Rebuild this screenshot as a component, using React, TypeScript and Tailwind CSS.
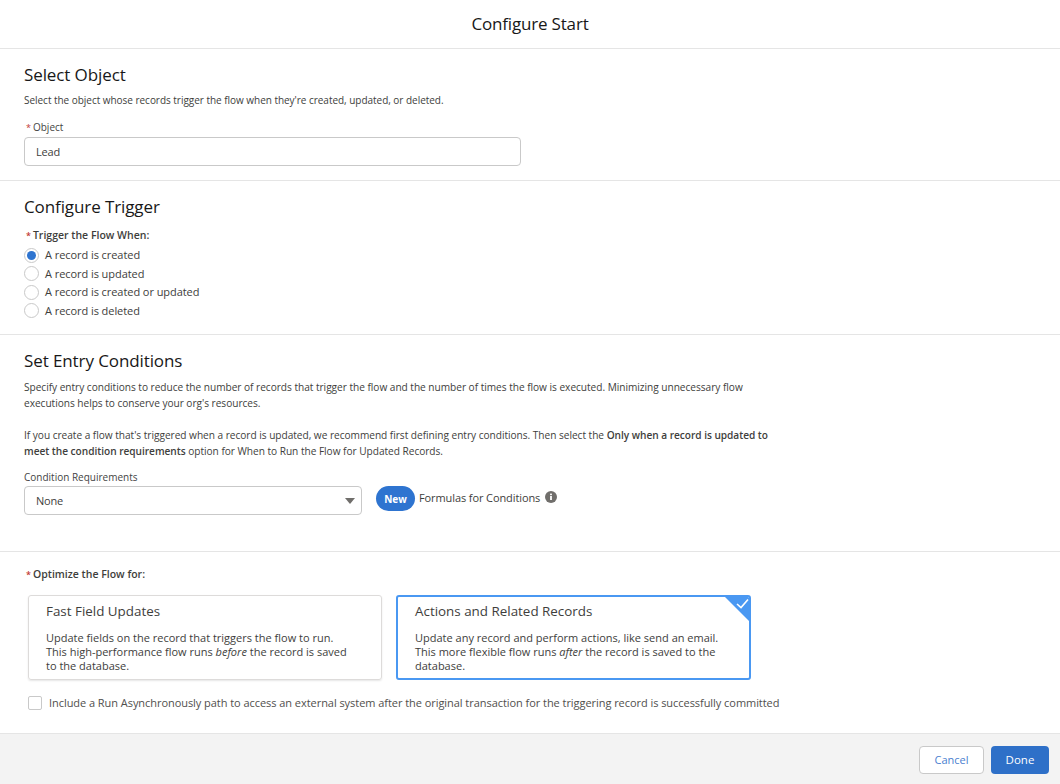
import React from "react";

const font = { fontFamily: '"Open Sans", "Noto Sans", sans-serif' };

function Radio({ label, checked }: { label: string; checked?: boolean }) {
  return (
    <div className="flex items-center h-[18.5px]">
      <span className="w-[15px] h-[15px] rounded-full border border-[#c9c9c9] bg-white flex items-center justify-center shrink-0">
        {checked && <span className="w-[9px] h-[9px] rounded-full bg-[#2e74d0]" />}
      </span>
      <span className="ml-[6px] text-[11px] leading-[14px] text-[#3e3e3c] tracking-[-0.06px]">{label}</span>
    </div>
  );
}

function Req() {
  return <span className="text-[#c23934] text-[9px] mr-[2px]">*</span>;
}

export default function App() {
  return (
    <div className="w-[1060px] h-[784px] bg-white flex flex-col overflow-hidden" style={font}>
      <header className="h-[49px] shrink-0 border-b border-[#e5e5e5] flex items-center justify-center">
        <h1 className="text-[17px] text-[#181818] tracking-[-0.18px]">Configure Start</h1>
      </header>

      <section className="h-[132px] shrink-0 border-b border-[#e5e5e5] px-[24px] pt-[15px]">
        <h2 className="text-[17px] leading-[22px] text-[#181818] tracking-[-0.1px]">Select Object</h2>
        <p className="mt-[7px] text-[10px] leading-[14px] text-[#3e3e3c] tracking-[-0.03px]">
          Select the object whose records trigger the flow when they're created, updated, or deleted.
        </p>
        <div className="mt-[13px] text-[10px] leading-[14px] text-[#444444] pl-[2px]"><Req />Object</div>
        <div className="mt-[2px] w-[497px] h-[29px] border border-[#c9c9c9] rounded-[4px] px-[11px] pt-[2px] flex items-center text-[11px] text-[#3e3e3c] tracking-[-0.2px]">Lead</div>
      </section>

      <section className="h-[154px] shrink-0 border-b border-[#e5e5e5] px-[24px] pt-[15px]">
        <h2 className="text-[17px] leading-[22px] text-[#181818] tracking-[-0.1px]">Configure Trigger</h2>
        <div className="mt-[10px] text-[10.5px] leading-[14px] font-semibold text-[#3e3e3c] pl-[2px]"><Req />Trigger the Flow When:</div>
        <div className="mt-[3px] flex flex-col">
          <Radio checked label="A record is created" />
          <Radio label="A record is updated" />
          <Radio label="A record is created or updated" />
          <Radio label="A record is deleted" />
        </div>
      </section>

      <section className="h-[217px] shrink-0 border-b border-[#e5e5e5] px-[24px] pt-[15px]">
        <h2 className="text-[17px] leading-[22px] text-[#181818] tracking-[-0.1px]">Set Entry Conditions</h2>
        <div className="w-[760px] mt-[7px] text-[10.15px] leading-[16px] text-[#3e3e3c] tracking-[-0.03px]">
          <p>Specify entry conditions to reduce the number of records that trigger the flow and the number of times the flow is executed. Minimizing unnecessary flow executions helps to conserve your org's resources.</p>
          <p className="mt-[16px]">If you create a flow that's triggered when a record is updated, we recommend first defining entry conditions. Then select the <b className="font-semibold">Only when a record is updated to meet the condition requirements</b> option for When to Run the Flow for Updated Records.</p>
        </div>
        <div className="mt-[11px] text-[10px] leading-[14px] text-[#444444]">Condition Requirements</div>
        <div className="mt-[2px] flex items-start">
          <div className="w-[338px] h-[29px] border border-[#c9c9c9] rounded-[4px] pl-[11px] pr-[6px] pt-[1px] flex items-center justify-between text-[11px] text-[#3e3e3c] tracking-[-0.2px]">
            None
            <svg width="10" height="6" viewBox="0 0 10 6"><path d="M0 0h10L5 6z" fill="#706e6b" /></svg>
          </div>
          <span className="ml-[14px] w-[39px] h-[25px] rounded-full bg-[#2e74d0] text-white text-[10px] font-bold flex items-center justify-center pt-[1px] tracking-[-0.1px]">New</span>
          <span className="ml-[4px] text-[11px] leading-[23px] text-[#3e3e3c] tracking-[-0.1px]">Formulas for Conditions</span>
          <svg className="ml-[5px] mt-[5px]" width="12" height="12" viewBox="0 0 12 12">
            <circle cx="6" cy="6" r="6" fill="#706e6b" />
            <rect x="5.1" y="5" width="1.8" height="4" fill="#fff" />
            <rect x="5.1" y="2.6" width="1.8" height="1.6" fill="#fff" />
          </svg>
        </div>
      </section>

      <section className="flex-1 px-[26px] pt-[15px]">
        <div className="text-[10.5px] leading-[14px] font-semibold text-[#3e3e3c]"><Req />Optimize the Flow for:</div>
        <div className="mt-[13px] ml-[2px] flex gap-[14px]">
          <div className="w-[354px] h-[85px] border border-[#dddbda] rounded-[3px] shadow-[0_1px_2px_rgba(0,0,0,0.1)] pl-[17px] pt-[6px]">
            <h3 className="text-[13.4px] leading-[18px] text-[#3e3e3c]">Fast Field Updates</h3>
            <p className="mt-[11px] text-[11px] leading-[14px] text-[#3e3e3c]">Update fields on the record that triggers the flow to run.<br />This high-performance flow runs <i>before</i> the record is saved<br />to the database.</p>
          </div>
          <div className="relative w-[355px] h-[85px] border-2 border-[#4a98f2] rounded-[3px] pl-[17px] pt-[5px] overflow-hidden">
            <h3 className="text-[13.4px] leading-[18px] text-[#3e3e3c]">Actions and Related Records</h3>
            <p className="mt-[11px] text-[11px] leading-[14px] text-[#3e3e3c]">Update any record and perform actions, like send an email.<br />This more flexible flow runs <i>after</i> the record is saved to the<br />database.</p>
            <svg className="absolute top-0 right-0" width="24" height="24" viewBox="0 0 24 24">
              <path d="M0 0h24v24z" fill="#4a98f2" />
              <path d="M12 7l4 3.5L23 2.5" fill="none" stroke="#fff" strokeWidth="1.6" />
            </svg>
          </div>
        </div>
        <div className="mt-[16px] ml-[2px] flex items-center">
          <span className="w-[14px] h-[14px] border border-[#c9c9c9] rounded-[2px]" />
          <span className="ml-[7px] text-[11px] leading-[14px] text-[#514f4d] tracking-[-0.05px]">Include a Run Asynchronously path to access an external system after the original transaction for the triggering record is successfully committed</span>
        </div>
      </section>

      <footer className="h-[51px] shrink-0 bg-[#f3f3f3] border-t border-[#e5e5e5] flex items-center justify-end pr-[11px] pt-[2px] gap-[7px]">
        <button className="w-[65px] h-[28px] bg-white border border-[#c9c9c9] rounded-[4px] text-[11px] text-[#4a80d0]">Cancel</button>
        <button className="w-[58px] h-[28px] bg-[#2e70c8] rounded-[4px] text-[11.5px] text-white">Done</button>
      </footer>
    </div>
  );
}
